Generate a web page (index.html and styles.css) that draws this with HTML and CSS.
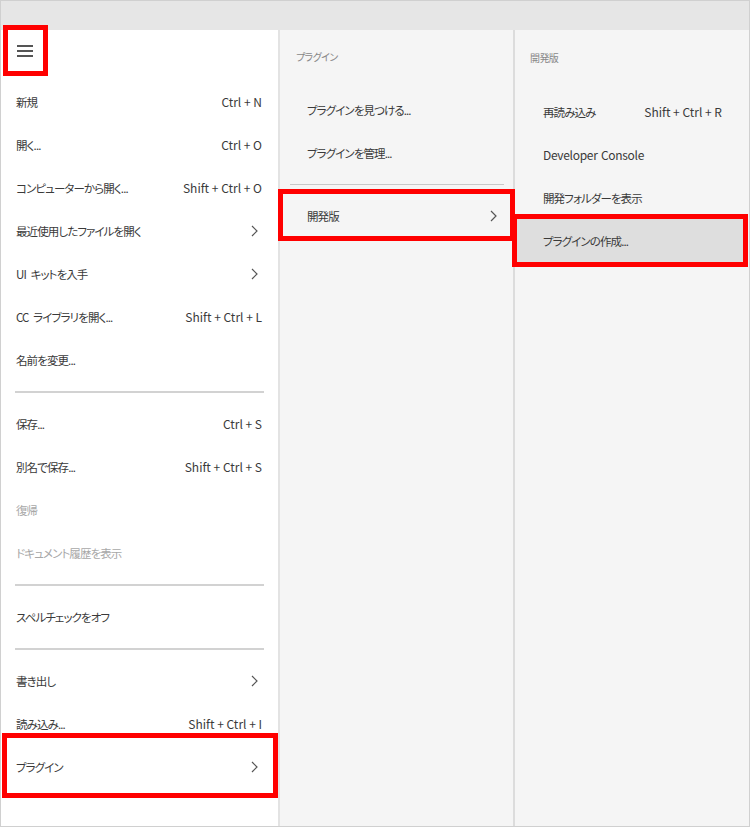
FILE: index.html
```html
<!DOCTYPE html>
<html>
    <head>
        <meta charset='utf-8'>
        <title>menu</title>
        <link rel="stylesheet" href="styles.css">
    </head>
    <body>
        <div class='window'>
            <div class='titlebar'></div>
            <div class='panes'>
                <div class='pane main-pane'>
                    <div class='burger-row'>
                        <div class='burger marked'>
                            <span></span><span></span><span></span>
                        </div>
                    </div>
                    <div class='item'><span class='label'>新規</span><span class='key'>Ctrl + N</span></div>
                    <div class='item'><span class='label'>開く...</span><span class='key'>Ctrl + O</span></div>
                    <div class='item'><span class='label'>コンピューターから開く...</span><span class='key'>Shift + Ctrl + O</span></div>
                    <div class='item'><span class='label'>最近使用したファイルを開く</span><svg class='chev' width='7' height='12' viewBox='0 0 7 12'><path d='M1 1 L6 6 L1 11'/></svg></div>
                    <div class='item'><span class='label'>UI キットを入手</span><svg class='chev' width='7' height='12' viewBox='0 0 7 12'><path d='M1 1 L6 6 L1 11'/></svg></div>
                    <div class='item'><span class='label'>CC ライブラリを開く...</span><span class='key'>Shift + Ctrl + L</span></div>
                    <div class='item'><span class='label'>名前を変更...</span></div>
                    <div class='sep'></div>
                    <div class='item'><span class='label'>保存...</span><span class='key'>Ctrl + S</span></div>
                    <div class='item'><span class='label'>別名で保存...</span><span class='key'>Shift + Ctrl + S</span></div>
                    <div class='item disabled'><span class='label'>復帰</span></div>
                    <div class='item disabled'><span class='label'>ドキュメント履歴を表示</span></div>
                    <div class='sep'></div>
                    <div class='item'><span class='label'>スペルチェックをオフ</span></div>
                    <div class='sep'></div>
                    <div class='item'><span class='label'>書き出し</span><svg class='chev' width='7' height='12' viewBox='0 0 7 12'><path d='M1 1 L6 6 L1 11'/></svg></div>
                    <div class='item'><span class='label'>読み込み...</span><span class='key'>Shift + Ctrl + I</span></div>
                    <div class='item marked plugin-item'><span class='label'>プラグイン</span><svg class='chev' width='7' height='12' viewBox='0 0 7 12'><path d='M1 1 L6 6 L1 11'/></svg></div>
                </div>
                <div class='pane sub-pane'>
                    <div class='heading'>プラグイン</div>
                    <div class='item'><span class='label'>プラグインを見つける...</span></div>
                    <div class='item'><span class='label'>プラグインを管理...</span></div>
                    <div class='sep'></div>
                    <div class='item marked dev-item'><span class='label'>開発版</span><svg class='chev' width='7' height='12' viewBox='0 0 7 12'><path d='M1 1 L6 6 L1 11'/></svg></div>
                </div>
                <div class='pane dev-pane'>
                    <div class='heading'>開発版</div>
                    <div class='item'><span class='label'>再読み込み</span><span class='key'>Shift + Ctrl + R</span></div>
                    <div class='item'><span class='label latin'>Developer Console</span></div>
                    <div class='item'><span class='label'>開発フォルダーを表示</span></div>
                    <div class='item hover marked create-item'><span class='label'>プラグインの作成...</span></div>
                </div>
            </div>
        </div>
    </body>
</html>
```

FILE: styles.css
```css
*{
    box-sizing: border-box;
}
body{
    margin: 0;
    font-family: "Noto Sans CJK JP", "Noto Sans", sans-serif;
    font-size: 12px;
    font-feature-settings: "palt";
    color: #3a3a3a;
}

.window{
    width: 750px;
    height: 827px;
    border: 1px solid #d0d0d0;
    display: flex;
    flex-direction: column;
}

.titlebar{
    height: 29px;
    background-color: #e6e6e6;
}

.panes{
    flex: 1;
    display: flex;
}

.pane{
    display: flex;
    flex-direction: column;
}

.main-pane{
    width: 279px;
    background-color: #fff;
    border-right: 2px solid #e3e3e3;
}

.sub-pane{
    width: 235px;
    background-color: #f5f5f5;
    border-right: 2px solid #dcdcdc;
}

.dev-pane{
    flex: 1;
    background-color: #f5f5f5;
}

.burger-row{
    height: 50px;
}

.burger{
    width: 45px;
    height: 51px;
    margin: -5px 0 0 2px;
    display: flex;
    flex-direction: column;
    justify-content: center;
    align-items: center;
    gap: 3px;
    padding-right: 2px;
}

.burger span{
    display: block;
    width: 16px;
    height: 2px;
    background-color: #555;
}

.item{
    position: relative;
    height: 43px;
    display: flex;
    justify-content: space-between;
    align-items: center;
    padding: 0 16px 0 15px;
    white-space: nowrap;
}

.label{
    font-size: 11.5px;
    letter-spacing: -0.9px;
    word-spacing: 3px;
}

.label.latin{
    font-size: 12px;
    letter-spacing: -0.3px;
    word-spacing: 1px;
}

.key{
    font-size: 12px;
}

.main-pane .chev{
    margin-right: 4px;
}

.chev{
    fill: none;
    stroke: #555;
    stroke-width: 1.2;
}

.disabled{
    color: #a8a8a8;
}

.sep{
    height: 2px;
    margin: 10px 14px 9px 14px;
    background-color: #d2d2d2;
}

.sub-pane .sep{
    margin: 10px 9px 9px 10px;
    height: 1px;
    background-color: #c8c8c8;
}

.heading{
    font-size: 10px;
    letter-spacing: -0.6px;
    color: #888;
    height: 14px;
    line-height: 14px;
    margin: 20px 0 24px 16px;
}

.dev-pane .heading{
    margin: 21px 0 25px 15px;
}

.sub-pane .item{
    padding: 0 16px 0 27px;
}

.dev-pane .item{
    padding: 0 27px 0 28px;
}

.dev-pane .hover{
    background-color: #dedede;
    margin-right: 6px;
}

.marked{
    position: relative;
}

.burger.marked{
    border: 5px solid #ff0000;
}

.marked.item::after{
    content: '';
    position: absolute;
    border: 5px solid #ff0000;
}

.plugin-item::after{
    top: -12px;
    bottom: -10px;
    left: 1px;
    right: 0;
}

.dev-item::after{
    top: -5px;
    bottom: -4px;
    left: -2px;
    right: -2px;
}

.create-item::after{
    top: -5px;
    bottom: -5px;
    left: -3px;
    right: -5px;
}
```
